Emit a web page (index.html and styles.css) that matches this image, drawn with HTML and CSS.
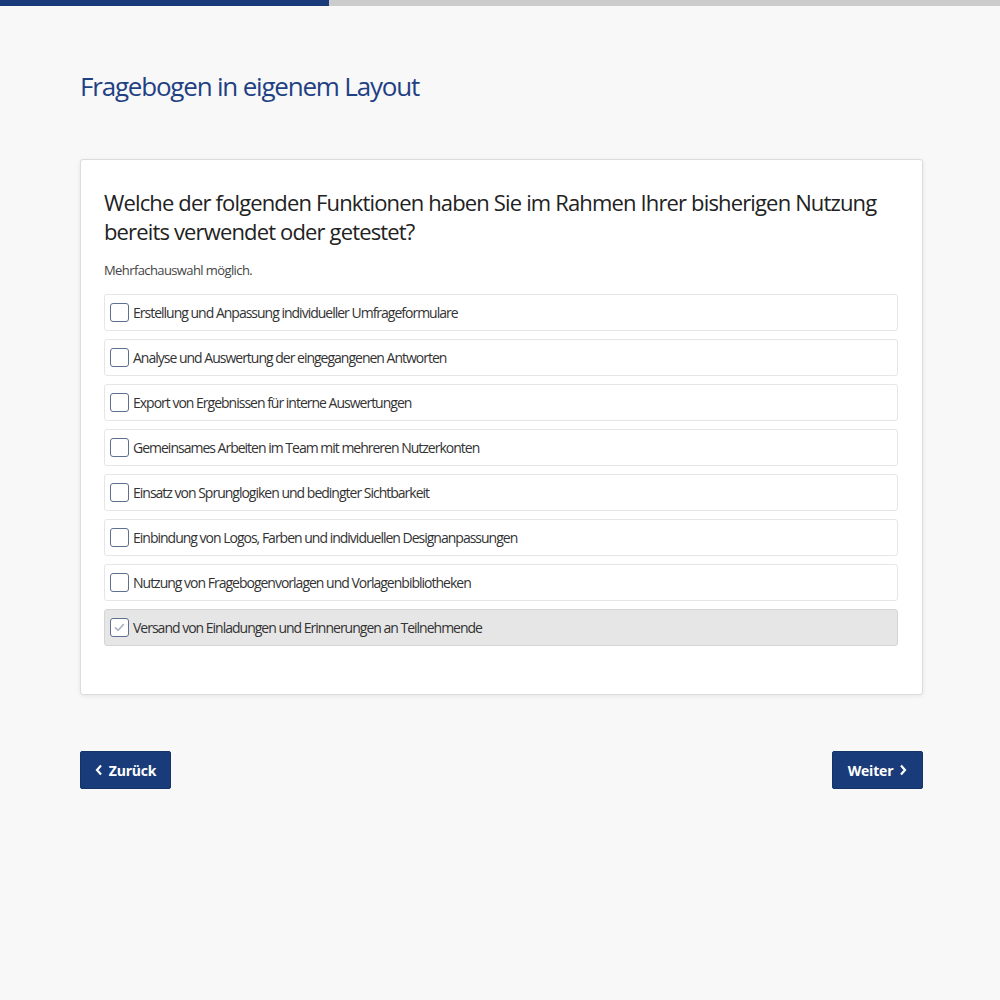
FILE: index.html
```html
<!DOCTYPE html>
<html lang="de">
<head>
<meta charset="utf-8">
<title>Fragebogen in eigenem Layout</title>
<link rel="stylesheet" href="styles.css">
</head>
<body>
<div class="progress"><div class="progress-fill" style="width:32.9%"></div></div>
<main class="page">
  <h1 class="title">Fragebogen in eigenem Layout</h1>
  <section class="card">
    <h2 class="question">Welche der folgenden Funktionen haben Sie im Rahmen Ihrer bisherigen Nutzung bereits verwendet oder getestet?</h2>
    <p class="hint">Mehrfachauswahl möglich.</p>
    <div class="options">
      <label class="option"><span class="box"></span><span class="label">Erstellung und Anpassung individueller Umfrageformulare</span></label>
      <label class="option"><span class="box"></span><span class="label">Analyse und Auswertung der eingegangenen Antworten</span></label>
      <label class="option"><span class="box"></span><span class="label">Export von Ergebnissen für interne Auswertungen</span></label>
      <label class="option"><span class="box"></span><span class="label">Gemeinsames Arbeiten im Team mit mehreren Nutzerkonten</span></label>
      <label class="option"><span class="box"></span><span class="label">Einsatz von Sprunglogiken und bedingter Sichtbarkeit</span></label>
      <label class="option"><span class="box"></span><span class="label">Einbindung von Logos, Farben und individuellen Designanpassungen</span></label>
      <label class="option"><span class="box"></span><span class="label">Nutzung von Fragebogenvorlagen und Vorlagenbibliotheken</span></label>
      <label class="option selected"><span class="box"><svg viewBox="0 0 19 19" width="19" height="19"><path d="M5.5 9.8 L8.2 12.3 L13.3 6.6" fill="none" stroke="#a9b4c6" stroke-width="1.6" stroke-linecap="round" stroke-linejoin="round"/></svg></span><span class="label">Versand von Einladungen und Erinnerungen an Teilnehmende</span></label>
    </div>
  </section>
  <nav class="nav">
    <button class="btn"><svg class="chev" viewBox="0 0 8 12" width="8" height="12"><path d="M6 1.5 L2 6 L6 10.5" fill="none" stroke="#fff" stroke-width="2.2"/></svg>Zurück</button>
    <button class="btn">Weiter<svg class="chev" viewBox="0 0 8 12" width="8" height="12"><path d="M2 1.5 L6 6 L2 10.5" fill="none" stroke="#fff" stroke-width="2.2"/></svg></button>
  </nav>
</main>
</body>
</html>
```
FILE: styles.css
```css
* { box-sizing: border-box; }
html, body { margin: 0; padding: 0; }
body {
  background: #f8f8f8;
  font-family: "Open Sans", "Noto Sans", sans-serif;
  color: #333;
}
.progress {
  height: 6px;
  background: #cccccc;
}
.progress-fill {
  height: 100%;
  background: #1a3b7a;
}
.page {
  width: 843px;
  margin: 0 0 0 80px;
  padding-top: 62px;
}
.title {
  margin: 0;
  font-weight: 400;
  font-size: 26px;
  letter-spacing: -1.2px;
  color: #1f4184;
  line-height: 36px;
}
.card {
  margin-top: 55px;
  background: #fff;
  border: 1px solid #dcdcdc;
  border-radius: 3px;
  box-shadow: 0 1px 4px rgba(0,0,0,0.08);
  padding: 28px 24px 48px 23px;
}
.question {
  margin: 0;
  font-weight: 400;
  font-size: 22px;
  letter-spacing: -0.85px;
  line-height: 29px;
  color: #222;
}
.hint {
  margin: 15px 0 15px 0;
  font-size: 13px;
  letter-spacing: -0.6px;
  color: #444;
}
.options {
  display: flex;
  flex-direction: column;
  gap: 8px;
}
.option {
  display: flex;
  align-items: center;
  gap: 4px;
  height: 37px;
  padding: 0 5px;
  border: 1px solid #e6e6e6;
  border-radius: 3px;
  background: #fff;
  cursor: pointer;
}
.option.selected {
  background: #e6e6e6;
  border-color: #d5d5d5;
}
.box {
  width: 19px;
  height: 19px;
  flex: none;
  border: 1px solid #5f6f8f;
  border-radius: 3px;
  background: #fff;
  display: block;
  position: relative;
}
.box svg { position: absolute; left: -1px; top: -1px; }
.label {
  font-size: 14px;
  letter-spacing: -1px;
  color: #333;
}
.nav {
  margin-top: 56px;
  display: flex;
  justify-content: space-between;
}
.btn {
  display: flex;
  align-items: center;
  gap: 6px;
  height: 38px;
  width: 91px;
  justify-content: center;
  padding: 0;
  background: #1a3b7a;
  color: #fff;
  border: 1px solid #163367;
  border-radius: 2px;
  font-family: "Open Sans", sans-serif;
  font-weight: 700;
  font-size: 14px;
  letter-spacing: -0.2px;
  cursor: pointer;
}
```
